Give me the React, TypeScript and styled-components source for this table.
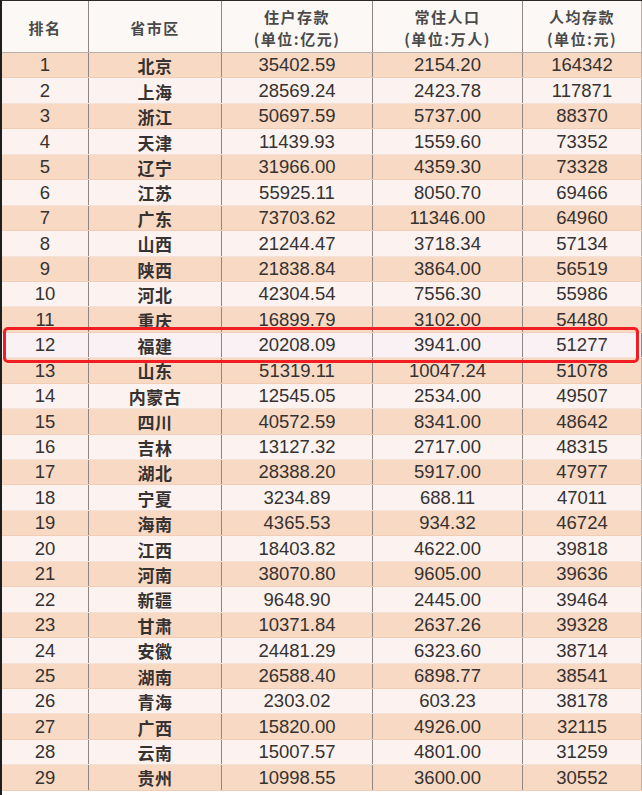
import styled, { createGlobalStyle } from "styled-components";

const GlobalStyle = createGlobalStyle`
  html, body {
    margin: 0;
    padding: 0;
    background: #ffffff;
  }
  body {
    font-family: "Liberation Sans", "Noto Sans CJK SC", sans-serif;
    color: #353535;
  }
`;

const COLUMNS = "87px 133px 151px 150px 1fr";

const Sheet = styled.div`
  width: 642px;
  height: 795px;
  box-sizing: border-box;
  border-left: 2px solid #1e1e1e;
  border-top: 1px solid #2a2a2a;
  background: #ffffff;
  overflow: hidden;
`;

const HeaderRow = styled.div`
  display: grid;
  grid-template-columns: ${COLUMNS};
  height: 51px;
  background: #fbf8f6;
  border-bottom: 1px solid #b9b0ab;
`;

const HeadCell = styled.div`
  display: flex;
  flex-direction: column;
  align-items: center;
  justify-content: center;
  padding-top: 2px;
  box-sizing: border-box;
  border-right: 1px solid #8f8683;
  font-family: "Noto Sans CJK SC", sans-serif;
  font-weight: 700;
  font-size: 15px;
  letter-spacing: 1.5px;
  color: #4a4a4a;
  &:last-child {
    border-right: 1px solid #b8b0ac;
  }
`;

const HeadLine = styled.span`
  display: block;
  height: 22px;
  line-height: 22px;
`;

const Row = styled.div<{ $peach: boolean; $marked?: boolean }>`
  position: relative;
  display: grid;
  grid-template-columns: ${COLUMNS};
  height: 25.45px;
  box-sizing: border-box;
  background: ${(p) => (p.$marked ? "#f9f1f3" : p.$peach ? "#f8d9c4" : "#fcf3f0")};
  border-bottom: 1px solid ${(p) => (p.$peach ? "#f1cdb6" : "#f3e2da")};
`;

const Marker = styled.div`
  position: absolute;
  left: 1px;
  right: 3px;
  top: -6px;
  bottom: -6px;
  border: 3.5px solid #f01e22;
  border-radius: 5px;
  pointer-events: none;
  z-index: 2;
`;

const Cell = styled.div<{ $cjk?: boolean }>`
  display: flex;
  align-items: center;
  justify-content: center;
  border-right: 1px solid #8f8683;
  font-family: ${(p) =>
    p.$cjk ? '"Noto Sans CJK SC", sans-serif' : '"Liberation Sans", Arial, sans-serif'};
  font-weight: ${(p) => (p.$cjk ? 700 : 400)};
  font-size: ${(p) => (p.$cjk ? "17px" : "18.5px")};
  letter-spacing: ${(p) => (p.$cjk ? "0.5px" : "0")};
  color: #353231;
  line-height: 1;
  padding-top: 1px;
  &:last-child {
    border-right: 1px solid #b8b0ac;
  }
`;

type Entry = [string, string, string, string];

const rows: Entry[] = [
  ["北京", "35402.59", "2154.20", "164342"],
  ["上海", "28569.24", "2423.78", "117871"],
  ["浙江", "50697.59", "5737.00", "88370"],
  ["天津", "11439.93", "1559.60", "73352"],
  ["辽宁", "31966.00", "4359.30", "73328"],
  ["江苏", "55925.11", "8050.70", "69466"],
  ["广东", "73703.62", "11346.00", "64960"],
  ["山西", "21244.47", "3718.34", "57134"],
  ["陕西", "21838.84", "3864.00", "56519"],
  ["河北", "42304.54", "7556.30", "55986"],
  ["重庆", "16899.79", "3102.00", "54480"],
  ["福建", "20208.09", "3941.00", "51277"],
  ["山东", "51319.11", "10047.24", "51078"],
  ["内蒙古", "12545.05", "2534.00", "49507"],
  ["四川", "40572.59", "8341.00", "48642"],
  ["吉林", "13127.32", "2717.00", "48315"],
  ["湖北", "28388.20", "5917.00", "47977"],
  ["宁夏", "3234.89", "688.11", "47011"],
  ["海南", "4365.53", "934.32", "46724"],
  ["江西", "18403.82", "4622.00", "39818"],
  ["河南", "38070.80", "9605.00", "39636"],
  ["新疆", "9648.90", "2445.00", "39464"],
  ["甘肃", "10371.84", "2637.26", "39328"],
  ["安徽", "24481.29", "6323.60", "38714"],
  ["湖南", "26588.40", "6898.77", "38541"],
  ["青海", "2303.02", "603.23", "38178"],
  ["广西", "15820.00", "4926.00", "32115"],
  ["云南", "15007.57", "4801.00", "31259"],
  ["贵州", "10998.55", "3600.00", "30552"],
];

const App = () => {
  return (
    <>
      <GlobalStyle />
      <Sheet>
        <HeaderRow>
          <HeadCell>排名</HeadCell>
          <HeadCell>省市区</HeadCell>
          <HeadCell>
            <HeadLine>住户存款</HeadLine>
            <HeadLine>(单位:亿元)</HeadLine>
          </HeadCell>
          <HeadCell>
            <HeadLine>常住人口</HeadLine>
            <HeadLine>(单位:万人)</HeadLine>
          </HeadCell>
          <HeadCell>
            <HeadLine>人均存款</HeadLine>
            <HeadLine>(单位:元)</HeadLine>
          </HeadCell>
        </HeaderRow>
        {rows.map((r, i) => {
          const rank = i + 1;
          const marked = rank === 12;
          return (
            <Row key={rank} $peach={rank % 2 === 1} $marked={marked}>
              <Cell>{rank}</Cell>
              <Cell $cjk>{r[0]}</Cell>
              <Cell>{r[1]}</Cell>
              <Cell>{r[2]}</Cell>
              <Cell>{r[3]}</Cell>
              {marked && <Marker />}
            </Row>
          );
        })}
      </Sheet>
    </>
  );
};

export default App;
